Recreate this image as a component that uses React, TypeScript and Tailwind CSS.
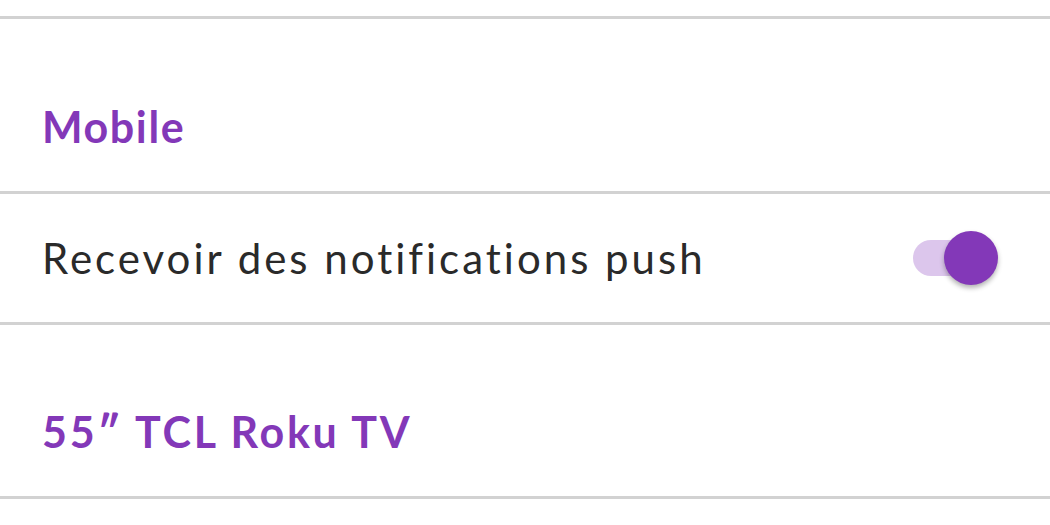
import React from 'react';

const SectionHeader = ({ title, h, track }: { title: string; h: string; track: string }) => (
  <div className={`${h} flex items-end border-b-[3px] border-[#d2d2d2] px-[42px] pb-[43px]`}>
    <h3 className={`text-[43px] leading-[43px] font-bold ${track} text-[#8338b8]`}>{title}</h3>
  </div>
);

export default function App() {
  return (
    <div className="w-[1050px] h-[525px] bg-white overflow-hidden font-['Lato','Liberation_Sans',sans-serif]">
      <div className="h-[19px] border-b-[3px] border-[#d2d2d2]" />

      <SectionHeader title="Mobile" h="h-[175px]" track="tracking-[1.6px]" />

      {/* push toggle row */}
      <div className="h-[131px] flex items-center justify-between border-b-[3px] border-[#d2d2d2] pl-[42px] pr-[52px]">
        <span className="text-[42px] leading-[42px] tracking-[3px] text-[#2a2a2a]">Recevoir des notifications push</span>
        <div className="relative w-[85px] h-[54px] flex items-center">
          <div className="w-[72px] h-[36px] rounded-full bg-[#dcc6ec]" />
          <div className="absolute right-0 top-0 w-[54px] h-[54px] rounded-full bg-[#8338b8] shadow-[0_3px_5px_rgba(0,0,0,0.3)]" />
        </div>
      </div>

      <SectionHeader title="55″ TCL Roku TV" h="h-[174px]" track="tracking-[2.7px]" />
    </div>
  );
}
